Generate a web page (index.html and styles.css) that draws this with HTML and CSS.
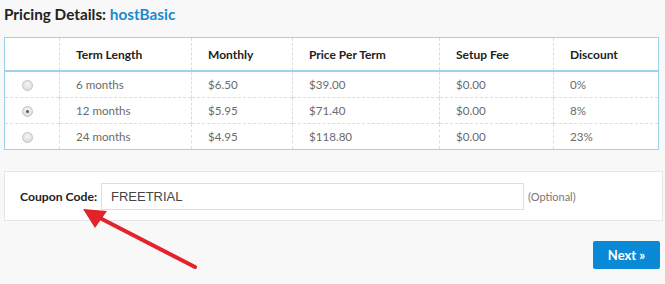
FILE: index.html
```html
<!DOCTYPE html>
<html>
<head>
    <title>Pricing Details</title>
    <link rel="stylesheet" href="styles.css">
</head>
<body>
    <h2 class="title">Pricing Details: <span class="plan">hostBasic</span></h2>

    <table class="pricing">
        <thead>
            <tr>
                <th class="c-radio"></th>
                <th class="c-term">Term Length</th>
                <th class="c-month">Monthly</th>
                <th class="c-price">Price Per Term</th>
                <th class="c-setup">Setup Fee</th>
                <th class="c-disc">Discount</th>
            </tr>
        </thead>
        <tbody>
            <tr>
                <td><span class="radio"></span></td>
                <td>6 months</td>
                <td>$6.50</td>
                <td>$39.00</td>
                <td>$0.00</td>
                <td>0%</td>
            </tr>
            <tr>
                <td><span class="radio checked"></span></td>
                <td>12 months</td>
                <td>$5.95</td>
                <td>$71.40</td>
                <td>$0.00</td>
                <td>8%</td>
            </tr>
            <tr>
                <td><span class="radio"></span></td>
                <td>24 months</td>
                <td>$4.95</td>
                <td>$118.80</td>
                <td>$0.00</td>
                <td>23%</td>
            </tr>
        </tbody>
    </table>

    <div class="coupon">
        <label class="coupon-label">Coupon Code:</label>
        <div class="coupon-input">FREETRIAL</div>
        <span class="optional">(Optional)</span>
    </div>

    <div class="actions">
        <button class="next">Next &raquo;</button>
    </div>

    <!-- red arrow pointing at the coupon field -->
    <svg class="arrow" width="665" height="284" viewBox="0 0 665 284">
        <line x1="195" y1="267" x2="98" y2="217" stroke="#e3232a" stroke-width="4" stroke-linecap="round"/>
        <polygon points="83,209 107,211 95,228" fill="#e3232a"/>
    </svg>
</body>
</html>
```

FILE: styles.css
```css
body {
    margin: 0;
    padding: 0 6px 0 4px;
    background: #f8f8f8;
    font-family: 'Lato', 'Open Sans', sans-serif;
    color: #333;
    position: relative;
    height: 284px;
    overflow: hidden;
}

.title {
    margin: 0;
    padding-top: 4px;
    height: 33px;
    font-size: 15.3px;
    font-weight: bold;
    color: #222;
    line-height: 20px;
}
.plan {
    color: #1a8ad0;
}

.pricing {
    width: 655px;
    border-collapse: collapse;
    table-layout: fixed;
    background: #fff;
    border: 1px solid #9dd3ea;
    font-size: 11.6px;
}
.pricing th {
    height: 32px;
    text-align: left;
    padding: 0 0 0 16px;
    font-weight: bold;
    font-size: 12px;
    color: #222;
    border-left: 1px dashed #ddd;
    border-bottom: 2px solid #9dd3ea;
}
.pricing td {
    height: 25px;
    padding: 0 0 0 16px;
    color: #6b6b6b;
    border-left: 1px dashed #ddd;
    border-top: 1px dashed #ddd;
}
.pricing tr > :first-child {
    border-left: none;
}
.pricing tbody tr:first-child td {
    border-top: none;
}
.c-radio { width: 38px; }
.c-term  { width: 115px; }
.c-month { width: 84px; }
.c-price { width: 130px; }
.c-setup { width: 97px; }

.radio {
    display: inline-block;
    width: 11px;
    height: 11px;
    margin-left: 1px;
    vertical-align: middle;
    border-radius: 50%;
    border: 1px solid #c4c4c4;
    background: radial-gradient(circle at 50% 35%, #f4f4f4, #d6d6d6);
    box-sizing: border-box;
    position: relative;
}
.radio.checked::after {
    content: '';
    position: absolute;
    left: 3px;
    top: 3px;
    width: 3px;
    height: 3px;
    border-radius: 50%;
    background: #555;
}

.coupon {
    margin-top: 21px;
    width: 659px;
    height: 50px;
    box-sizing: border-box;
    background: #fff;
    border: 1px solid #e6e6e6;
    display: flex;
    align-items: center;
    padding-left: 15px;
}
.coupon-label {
    font-size: 12.2px;
    font-weight: bold;
    color: #222;
    width: 81px;
}
.coupon-input {
    width: 423px;
    height: 27px;
    box-sizing: border-box;
    border: 1px solid #ddd;
    background: #fff;
    padding-left: 9px;
    line-height: 25px;
    font-family: 'Liberation Sans', Arial, sans-serif;
    font-size: 13px;
    color: #444;
}
.optional {
    margin-left: 4px;
    font-size: 11px;
    color: #777;
}

.actions {
    display: flex;
    justify-content: flex-end;
    padding-top: 20px;
    width: 656px;
}
.next {
    width: 67px;
    height: 28px;
    border: none;
    border-radius: 2px;
    background: #0a8ad6;
    color: #fff;
    font-family: 'Lato', sans-serif;
    font-weight: bold;
    font-size: 13px;
    padding: 0;
}

.arrow {
    position: absolute;
    left: 0;
    top: 0;
    pointer-events: none;
}
```
